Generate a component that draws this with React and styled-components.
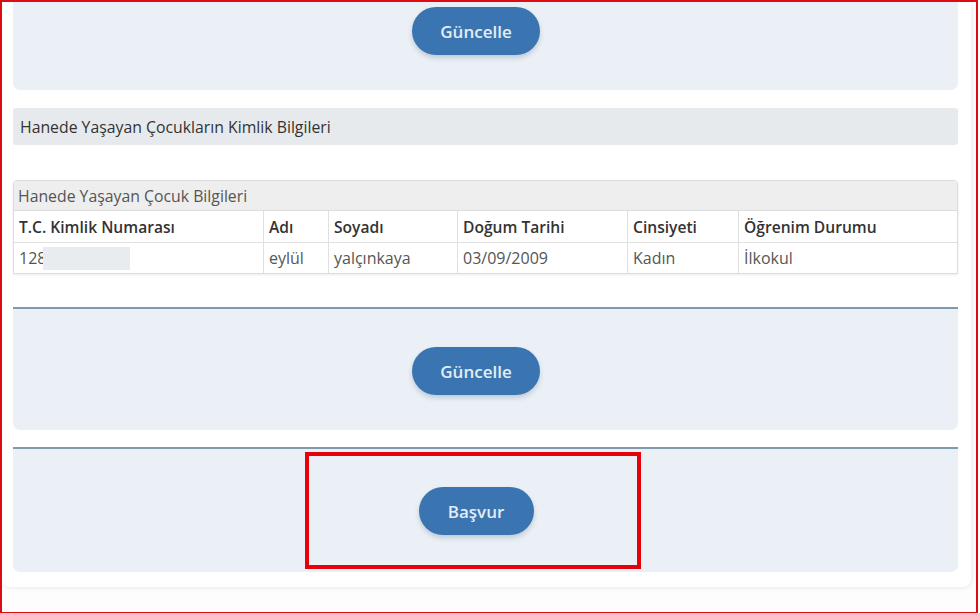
import styled, { createGlobalStyle } from 'styled-components';

const Global = createGlobalStyle`
  html, body {
    margin: 0;
    padding: 0;
    background: #ffffff;
    font-family: "Open Sans", "Noto Sans", sans-serif;
  }
`;

const Frame = styled.div`
  box-sizing: border-box;
  width: 978px;
  height: 613px;
  border: 2px solid #dc0b14;
  border-bottom-width: 1px;
  overflow: hidden;
  background: #fdfdfd;
`;

const Card = styled.div`
  width: 969px;
  box-sizing: border-box;
  padding: 0 13px 15px 11px;
  background: #ffffff;
  border-radius: 0 0 8px 8px;
  box-shadow: 1px 1px 4px rgba(0, 0, 0, 0.08);
  display: flex;
  flex-direction: column;
`;

const Panel = styled.div`
  position: relative;
  display: flex;
  justify-content: center;
  align-items: flex-start;
  box-sizing: border-box;
  height: ${props => props.h}px;
  padding-top: ${props => props.pt}px;
  padding-right: 19px;
  margin-top: ${props => props.mt || 0}px;
  background: #ebf0f6;
  border-top: ${props => props.line ? '2px solid #7f9aa9' : 'none'};
  border-radius: 0 0 7px 7px;
`;

const Button = styled.button`
  height: 48px;
  width: ${props => props.w}px;
  padding: 0;
  border: none;
  border-radius: 24px;
  background: #3a75b1;
  color: #e3edf7;
  font-family: "Open Sans", sans-serif;
  font-size: 17px;
  font-weight: 600;
  box-shadow: 0 3px 5px rgba(40, 70, 110, 0.22);
  cursor: pointer;
`;

const SectionBar = styled.div`
  margin-top: 18px;
  height: 37px;
  display: flex;
  align-items: center;
  padding-left: 7px;
  background: #e7eaed;
  border-radius: 3px;
  color: #333;
  font-size: 15.8px;
`;

const TableBox = styled.div`
  margin-top: 35px;
  border: 1px solid #dcdcdc;
  border-radius: 4px 4px 0 0;
  box-shadow: 0 1px 3px rgba(0, 0, 0, 0.08);
  overflow: hidden;
`;

const Caption = styled.div`
  height: 29px;
  display: flex;
  align-items: center;
  padding-left: 4px;
  background: #eeeeee;
  border-bottom: 1px solid #dcdcdc;
  color: #555;
  font-size: 15.8px;
`;

const Grid = styled.div`
  display: grid;
  grid-template-columns: 250px 65px 129px 170px 111px 1fr;
`;

const Cell = styled.div`
  height: ${props => props.head ? 31 : 30}px;
  display: flex;
  align-items: center;
  padding-left: 5px;
  border-right: 1px solid #e0e0e0;
  border-bottom: ${props => props.head ? '1px solid #e0e0e0' : 'none'};
  background: #ffffff;
  color: ${props => props.head ? '#333' : '#555'};
  font-size: ${props => props.head ? 15.6 : 16}px;
  font-weight: ${props => props.head ? 600 : 400};
  white-space: nowrap;
  &:nth-child(6n) {
    border-right: none;
  }
`;

const Redact = styled.span`
  display: inline-block;
  width: 87px;
  height: 23px;
  margin-left: -3px;
  background: #e8ebef;
`;

const Mark = styled.div`
  position: absolute;
  left: 292px;
  top: 3px;
  width: 336px;
  height: 117px;
  box-sizing: border-box;
  border: 4px solid #e5000b;
  pointer-events: none;
`;

const heads = ['T.C. Kimlik Numarası', 'Adı', 'Soyadı', 'Doğum Tarihi', 'Cinsiyeti', 'Öğrenim Durumu'];
const row = ['eylül', 'yalçınkaya', '03/09/2009', 'Kadın', 'İlkokul'];

export default function App() {
  return (
    <Frame>
      <Global />
      <Card>
        <Panel h={88} pt={5}>
          <Button w={128}>Güncelle</Button>
        </Panel>

        <SectionBar>Hanede Yaşayan Çocukların Kimlik Bilgileri</SectionBar>

        <TableBox>
          <Caption>Hanede Yaşayan Çocuk Bilgileri</Caption>
          <Grid>
            {heads.map(h => <Cell head key={h}>{h}</Cell>)}
            <Cell>128<Redact /></Cell>
            {row.map(v => <Cell key={v}>{v}</Cell>)}
          </Grid>
        </TableBox>

        <Panel h={123} pt={38} mt={33} line>
          <Button w={128}>Güncelle</Button>
        </Panel>

        <Panel h={125} pt={38} mt={17} line>
          <Button w={115}>Başvur</Button>
          <Mark />
        </Panel>
      </Card>
    </Frame>
  );
}
